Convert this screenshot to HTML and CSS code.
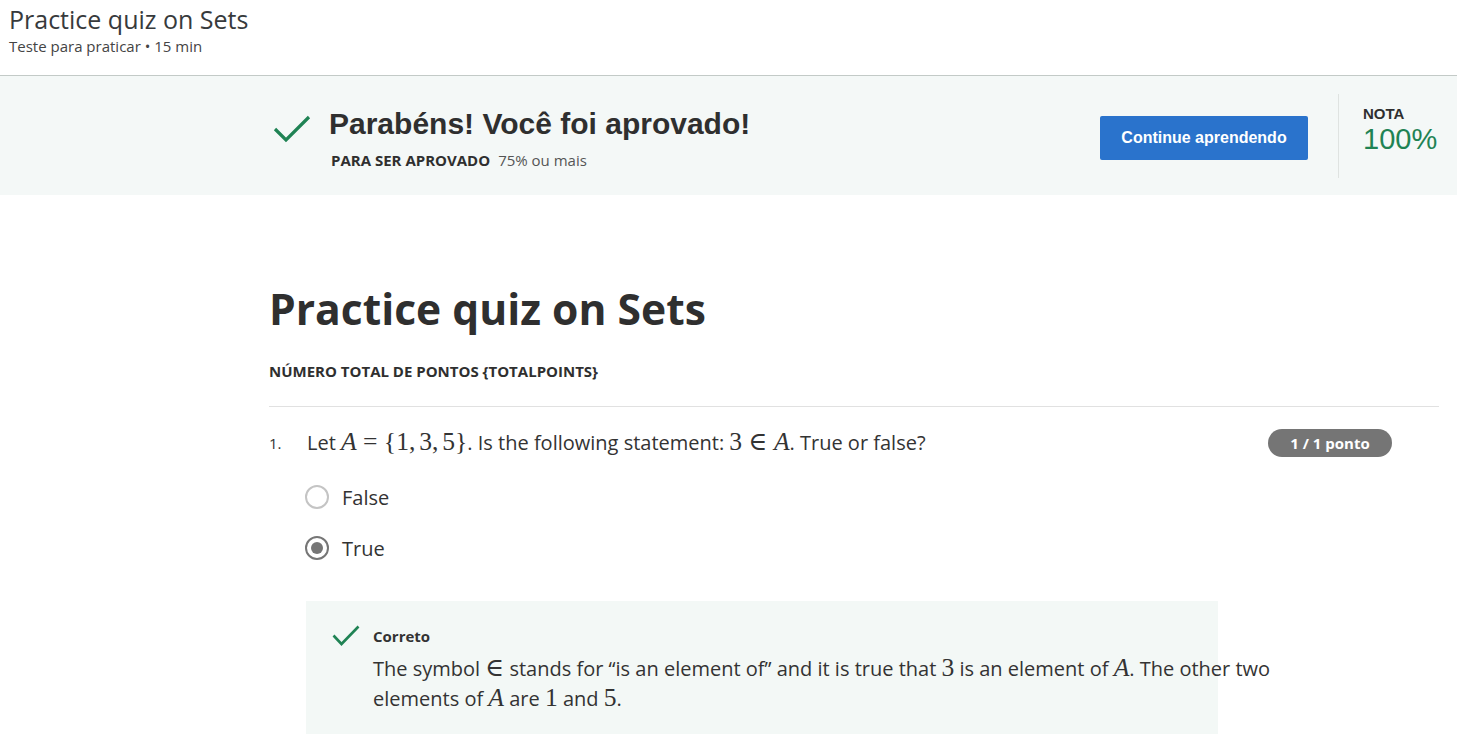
FILE: index.html
```html
<!DOCTYPE html>
<html lang="pt">
<head>
<meta charset="utf-8">
<title>Practice quiz on Sets</title>
<link rel="stylesheet" href="styles.css">
</head>
<body>
<header class="topbar">
  <div class="top-title">Practice quiz on Sets</div>
  <div class="top-sub">Teste para praticar • 15 min</div>
</header>

<section class="banner">
  <div class="banner-inner">
    <div class="banner-left">
      <svg class="big-check" width="38" height="28" viewBox="0 0 38 28"><path d="M2 14 L13 25 L36 2" fill="none" stroke="#1f8354" stroke-width="3.2"/></svg>
      <div class="banner-text">
        <div class="banner-title">Parabéns! Você foi aprovado!</div>
        <div class="banner-sub"><b>PARA SER APROVADO</b><span>75% ou mais</span></div>
      </div>
    </div>
    <button class="cta">Continue aprendendo</button>
    <div class="grade">
      <div class="grade-label">NOTA</div>
      <div class="grade-value">100%</div>
    </div>
  </div>
</section>

<main class="content">
  <h1 class="quiz-title">Practice quiz on Sets</h1>
  <div class="total">NÚMERO TOTAL DE PONTOS {TOTALPOINTS}</div>
  <hr class="sep">

  <div class="question">
    <div class="q-num">1.</div>
    <div class="q-body">
      <div class="q-head">
        <div class="q-text">Let <span class="m"><i>A</i><span class="rel">=</span>{1,<span class="sp"></span>3,<span class="sp"></span>5}</span>. Is the following statement: <span class="m">3<span class="rel">∈</span><i>A</i></span>. True or false?</div>
        <div class="badge">1 / 1 ponto</div>
      </div>
      <div class="option"><span class="radio"></span><span>False</span></div>
      <div class="option"><span class="radio checked"></span><span>True</span></div>
      <div class="feedback">
        <svg class="small-check" width="28" height="22" viewBox="0 0 28 22"><path d="M1.5 10.5 L9.5 19 L26.5 1.5" fill="none" stroke="#1f8354" stroke-width="2.6"/></svg>
        <div class="fb-body">
          <div class="fb-title">Correto</div>
          <p class="fb-text">The symbol <span class="m">∈</span> stands for “is an element of” and it is true that <span class="m">3</span> is an element of <span class="m"><i>A</i></span>. The other two elements of <span class="m"><i>A</i></span> are <span class="m">1</span> and <span class="m">5</span>.</p>
        </div>
      </div>
    </div>
  </div>
</main>
</body>
</html>
```

FILE: styles.css
```css
html, body {
  margin: 0;
  padding: 0;
  background: #fff;
  color: #333;
  font-family: "Open Sans", "Liberation Sans", sans-serif;
}

.topbar {
  padding: 3px 9px 0;
  height: 76px;
  box-sizing: border-box;
  border-bottom: 1px solid #c3cac7;
}
.top-title {
  font-size: 25px;
  line-height: 33px;
  color: #373a3c;
}
.top-sub {
  font-size: 15px;
  line-height: 20px;
  color: #444;
}

.banner {
  background: #f4f8f7;
  height: 119px;
  box-sizing: border-box;
  padding: 18px 18px 16px 273px;
}
.banner-inner {
  display: flex;
  align-items: flex-start;
  height: 100%;
}
.banner-left {
  display: flex;
  align-items: flex-start;
  flex: 1;
  gap: 18px;
}
.big-check {
  margin-top: 21px;
}
.banner-title {
  font-family: "Liberation Sans", Arial, sans-serif;
  font-weight: bold;
  font-size: 30px;
  line-height: 36px;
  margin-top: 12px;
  color: #2f2f2f;
}
.banner-sub {
  font-size: 15px;
  line-height: 20px;
  margin-top: 8px;
  margin-left: 2px;
  color: #555;
}
.banner-sub b {
  color: #2f2f2f;
  margin-right: 8px;
}
.cta {
  margin-top: 22px;
  width: 208px;
  height: 44px;
  border: 0;
  border-radius: 2px;
  background: #2a73cc;
  color: #fff;
  font-family: "Liberation Sans", Arial, sans-serif;
  font-weight: bold;
  font-size: 16px;
  cursor: pointer;
}
.grade {
  margin-left: 30px;
  border-left: 1px solid #dfe3e1;
  height: 84px;
  padding-left: 24px;
  width: 76px;
}
.grade-label {
  font-family: "Liberation Sans", Arial, sans-serif;
  font-weight: bold;
  font-size: 15px;
  color: #2f2f2f;
  margin-top: 11px;
  line-height: 18px;
}
.grade-value {
  font-family: "Liberation Sans", Arial, sans-serif;
  font-size: 29px;
  color: #1f8354;
  line-height: 32px;
}

.content {
  padding: 83px 18px 0 269px;
}
.quiz-title {
  font-size: 42.6px;
  font-weight: bold;
  margin: 0;
  line-height: 60px;
  color: #2f2f2f;
}
.total {
  font-size: 15px;
  line-height: 20px;
  font-weight: bold;
  margin-top: 23px;
  color: #2f2f2f;
}
.sep {
  border: 0;
  border-top: 1px solid #e1e1e1;
  margin: 25px 0 0;
}

.question {
  display: flex;
  padding-top: 21px;
}
.q-num {
  width: 38px;
  font-size: 15px;
  line-height: 30px;
  flex: none;
}
.q-body {
  flex: 1;
  min-width: 0;
}
.q-head {
  display: flex;
  justify-content: space-between;
  align-items: center;
  padding-right: 47px;
}
.q-text {
  font-size: 20px;
  line-height: 30px;
}
.m {
  font-family: "Liberation Serif", "DejaVu Serif", serif;
  font-size: 1.28em;
  line-height: 1;
}
.rel {
  margin: 0 0.25em;
}
.sp {
  margin-left: 0.15em;
}
.badge {
  background: #757575;
  color: #fff;
  font-weight: bold;
  font-size: 15px;
  border-radius: 14px;
  width: 124px;
  height: 28px;
  line-height: 28px;
  text-align: center;
  flex: none;
}
.option {
  display: flex;
  align-items: center;
  gap: 13px;
  font-size: 20px;
  height: 30px;
  margin-top: 24px;
  margin-left: -2px;
}
.option + .option {
  margin-top: 21px;
}
.radio {
  width: 24px;
  height: 24px;
  box-sizing: border-box;
  border: 2px solid #c4c4c4;
  border-radius: 50%;
  display: inline-flex;
  align-items: center;
  justify-content: center;
}
.radio.checked {
  border-color: #767676;
}
.radio.checked::after {
  content: "";
  width: 12px;
  height: 12px;
  border-radius: 50%;
  background: #767676;
}

.feedback {
  margin-top: 38px;
  margin-right: 221px;
  margin-left: -1px;
  background: #f3f8f6;
  display: flex;
  padding: 25px 0 20px 26px;
  gap: 13px;
}
.small-check {
  flex: none;
  margin-top: -1px;
}
.fb-body {
  flex: none;
  width: 920px;
}
.fb-title {
  font-size: 15px;
  font-weight: bold;
  line-height: 20px;
}
.fb-text {
  margin: 8px 0 0;
  font-size: 20px;
  line-height: 30px;
}
```
